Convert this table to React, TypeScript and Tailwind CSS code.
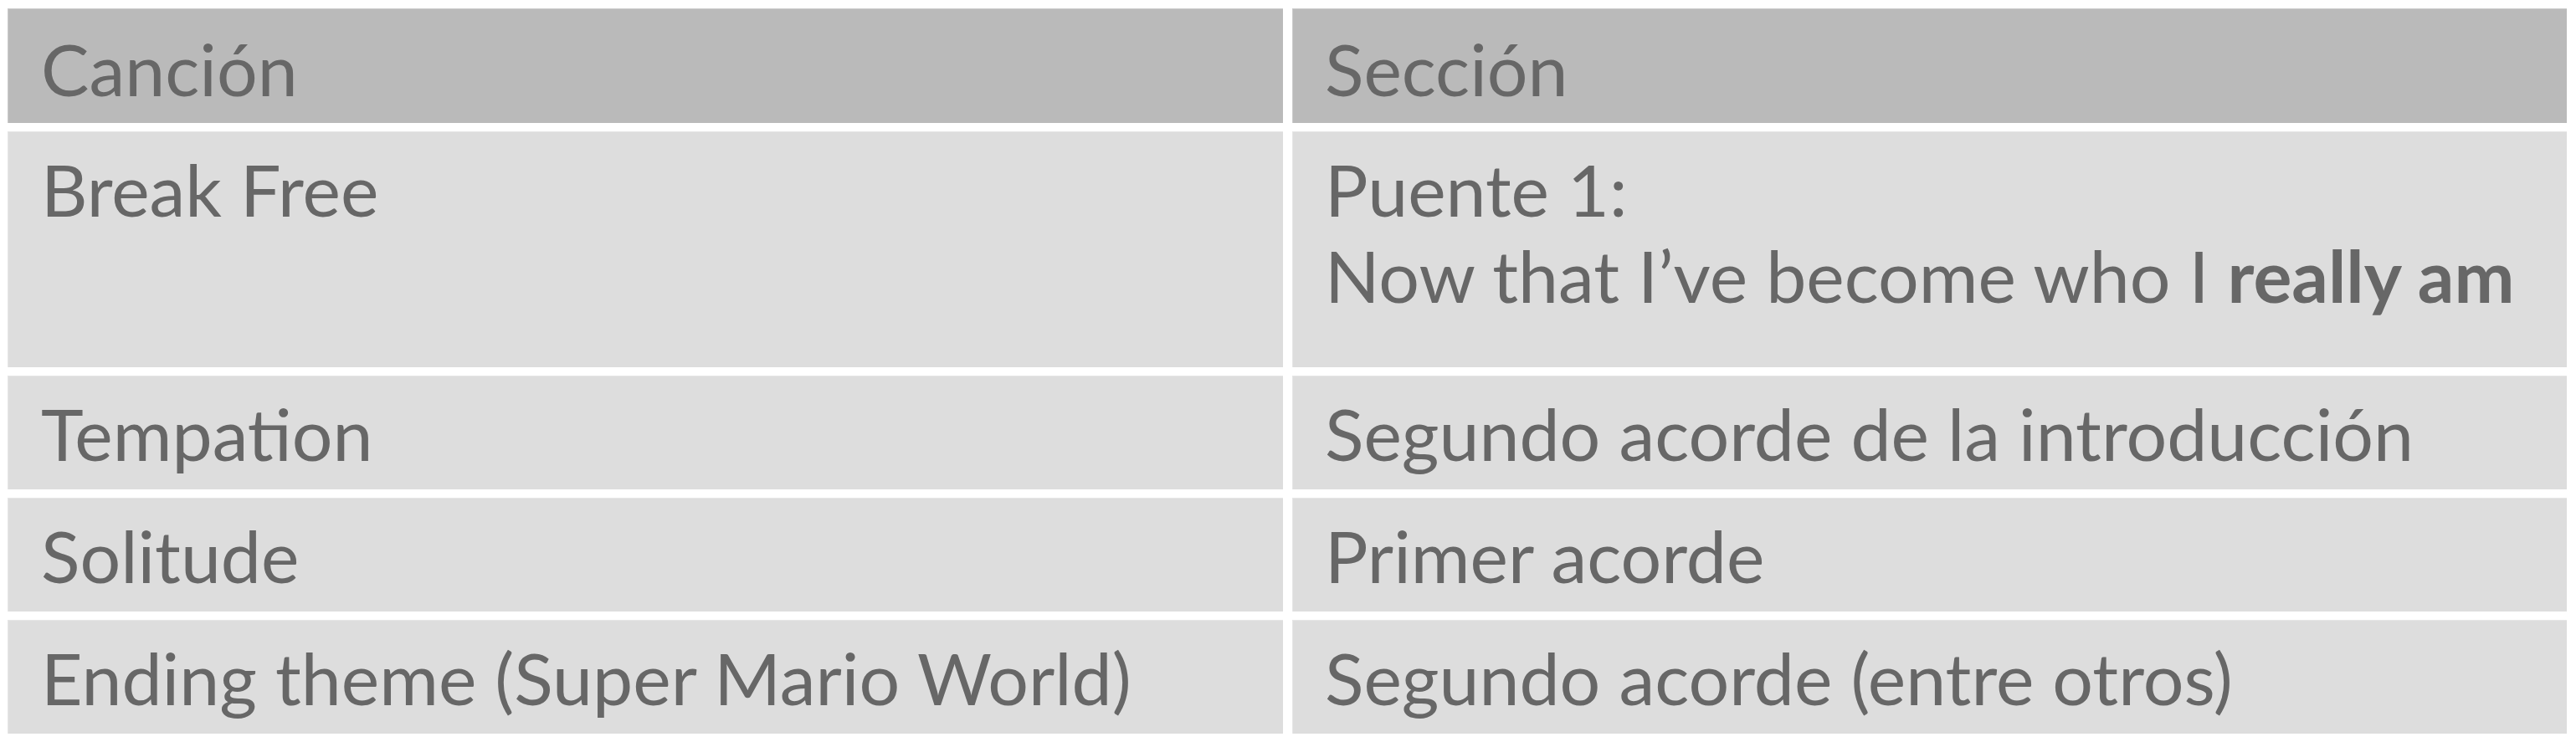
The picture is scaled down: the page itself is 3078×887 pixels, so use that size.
const rows: { song: string; section: React.ReactNode; tall?: boolean }[] = [
  {
    song: 'Break Free',
    tall: true,
    section: (
      <>
        Puente 1:
        <br />
        Now that I’ve become who I <strong className="font-bold">really am</strong>
      </>
    ),
  },
  { song: 'Tempation', section: 'Segundo acorde de la introducción' },
  { song: 'Solitude', section: 'Primer acorde' },
  { song: 'Ending theme (Super Mario World)', section: 'Segundo acorde (entre otros)' },
];

export default function App() {
  return (
    <div className="w-[3078px] h-[887px] bg-white pl-[9px] pt-[10px]" style={{ fontFamily: 'Lato, "Open Sans", sans-serif' }}>
      <div className="grid grid-cols-[1524px_1523px] gap-x-[11px] gap-y-[10px] text-[86px] leading-[103px] text-[#676767]">
        {/* Encabezado */}
        <div className="bg-[#bababa] border-t border-l border-[#cccccc] pl-[39px] pt-[19px] pb-[14px]">Canción</div>
        <div className="bg-[#bababa] border-t border-l border-[#cccccc] pl-[38px] pt-[19px] pb-[14px]">Sección</div>

        {rows.map((r) => (
          <>
            <div
              key={r.song + '-a'}
              className={`bg-[#dddddd] border-t border-l border-[#e6e6e6] pl-[39px] pt-[16px] pb-[16px] ${r.tall ? 'h-[282px]' : ''}`}
            >
              {r.song}
            </div>
            <div
              key={r.song + '-b'}
              className={`bg-[#dddddd] border-t border-l border-[#e6e6e6] pl-[38px] pt-[16px] pb-[16px] ${r.tall ? 'h-[282px]' : ''}`}
            >
              {r.section}
            </div>
          </>
        ))}
      </div>
    </div>
  );
}
